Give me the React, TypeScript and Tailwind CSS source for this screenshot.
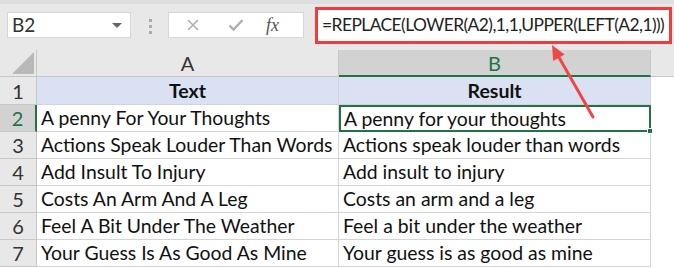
import React from 'react';

const rows = [
  ['A penny For Your Thoughts', 'A penny for your thoughts'],
  ['Actions Speak Louder Than Words', 'Actions speak louder than words'],
  ['Add Insult To Injury', 'Add insult to injury'],
  ['Costs An Arm And A Leg', 'Costs an arm and a leg'],
  ['Feel A Bit Under The Weather', 'Feel a bit under the weather'],
  ['Your Guess Is As Good As Mine', 'Your guess is as good as mine'],
];

export default function App() {
  return (
    <div className="relative w-[674px] h-[268px] overflow-hidden bg-white text-[#111] font-['Lato','Open_Sans',sans-serif]">
      {/* Formula bar */}
      <div className="flex items-start h-[50px] bg-[#e8e8e8] border-t-4 border-[#dedede]">
        <div className="shrink-0 ml-[7px] mt-[8px] w-[124px] h-[26px] bg-white border border-[#d6d6d6] flex items-center justify-between pl-[4px] pr-[8px]">
          <span className="text-[19px] text-[#333]">B2</span>
          <span className="w-0 h-0 border-l-[5px] border-r-[5px] border-t-[5px] border-l-transparent border-r-transparent border-t-[#666]" />
        </div>
        <div className="shrink-0 mt-[15px] ml-[18px] flex flex-col gap-[3px]">
          <span className="w-[3px] h-[3px] bg-[#aaa]" />
          <span className="w-[3px] h-[3px] bg-[#aaa]" />
          <span className="w-[3px] h-[3px] bg-[#aaa]" />
        </div>
        <div className="shrink-0 ml-[16px] mt-[8px] w-[136px] h-[26px] bg-white border border-[#d6d6d6] flex items-center">
          <svg width="14" height="14" viewBox="0 0 14 14" className="ml-[17px]">
            <path d="M2 2 L12 12 M12 2 L2 12" stroke="#b0b0b0" strokeWidth="1.6" fill="none" />
          </svg>
          <svg width="16" height="14" viewBox="0 0 16 14" className="ml-[28px]">
            <path d="M1.5 7.5 L5.5 11.5 L14.5 2" stroke="#b0b0b0" strokeWidth="2.4" fill="none" />
          </svg>
          <span className="ml-[22px] text-[18px] italic text-[#555] font-['Liberation_Serif',serif]">fx</span>
        </div>
        <div className="min-w-0 ml-[11px] mt-[3px] flex-1 mr-[2px] h-[37px] bg-white border-[3px] border-[#f03c3c] flex items-center pl-[4px] overflow-hidden">
          <span className="text-[17.4px] tracking-[-0.55px] text-[#222] whitespace-nowrap">=REPLACE(LOWER(A2),1,1,UPPER(LEFT(A2,1)))</span>
        </div>
      </div>

      {/* Sheet grid */}
      <div className="grid grid-cols-[37px_302px_312px_1fr] grid-rows-[27px_28px_27px_27px_27px_27px_27px_27px]">
        <div className="relative bg-[#e8e8e8] border-r border-b border-[#c8c8c8]">
          <svg width="22" height="22" className="absolute right-[2px] bottom-[2px]"><polygon points="22,0 22,22 0,22" fill="#b9b9b9" /></svg>
        </div>
        <div className="bg-[#e8e8e8] border-r border-b border-[#c8c8c8] flex items-center justify-center text-[20px] text-[#333]">A</div>
        <div className="bg-[#d2d2d2] border-r border-[#c8c8c8] border-b-2 border-b-[#217346] flex items-center justify-center text-[20px] text-[#217346]">B</div>
        <div className="bg-[#e8e8e8] border-b border-[#c8c8c8]" />

        <div className="bg-[#e8e8e8] border-r border-b border-[#c8c8c8] flex items-center justify-center text-[20px] text-[#333]">1</div>
        <div className="bg-[#d9e1f2] border-r border-b border-[#d4d4d4] flex items-center justify-center text-[19.5px] font-bold">Text</div>
        <div className="bg-[#d9e1f2] border-r border-b border-[#d4d4d4] flex items-center justify-center text-[19.5px] font-bold">Result</div>
        <div className="bg-white" />

        {rows.map(([a, b], i) => (
          <React.Fragment key={i}>
            <div
              className={
                i === 0
                  ? 'bg-[#d2d2d2] border-r-2 border-r-[#217346] border-b border-b-[#c8c8c8] flex items-center justify-center text-[20px] text-[#217346]'
                  : 'bg-[#e8e8e8] border-r border-b border-[#c8c8c8] flex items-center justify-center text-[20px] text-[#333]'
              }
            >
              {i + 2}
            </div>
            <div className="border-r border-b border-[#d4d4d4] flex items-center pl-[4px] text-[19.4px] whitespace-nowrap overflow-hidden">{a}</div>
            <div
              className={
                i === 0
                  ? 'relative border-2 border-[#217346] flex items-center pl-[3px] text-[19.4px] whitespace-nowrap'
                  : 'border-r border-b border-[#d4d4d4] flex items-center pl-[4px] text-[19.4px] whitespace-nowrap'
              }
            >
              {b}
              {i === 0 && <span className="absolute -right-[4px] -bottom-[4px] w-[6px] h-[6px] bg-[#217346] border border-white" />}
            </div>
            <div className="bg-white" />
          </React.Fragment>
        ))}
      </div>

      {/* Annotation arrow */}
      <svg className="absolute left-0 top-0 pointer-events-none" width="674" height="268">
        <line x1="593" y1="117" x2="558.9" y2="57.2" stroke="#ef4747" strokeWidth="3" strokeLinecap="round" />
        <polygon points="552,45 564.6,54.5 553.2,60.9" fill="#ef4747" />
      </svg>
    </div>
  );
}
